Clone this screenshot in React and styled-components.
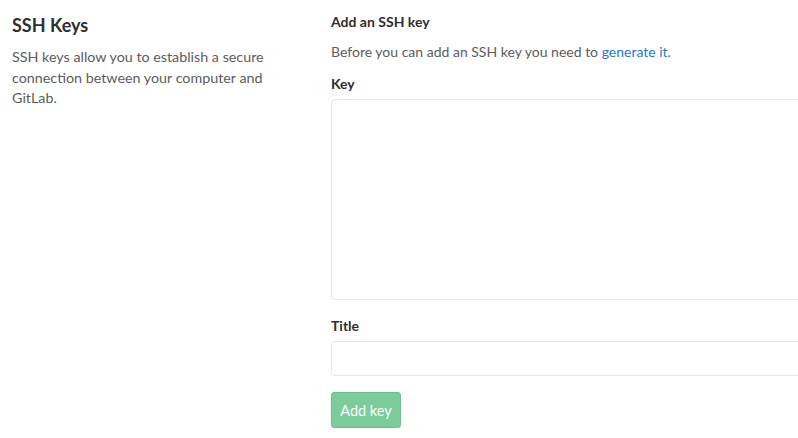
import React from "react";
import styled, { createGlobalStyle } from "styled-components";

const Global = createGlobalStyle`
  html, body { margin: 0; padding: 0; background: #fff; overflow: hidden; }
  body { font-family: Lato, "Noto Sans", sans-serif; }
`;

const Page = styled.div`
  display: grid;
  grid-template-columns: 331px 600px;
  width: 931px;
`;

const Side = styled.div`
  padding: 13px 0 0 12px;
`;

const SideTitle = styled.h4`
  margin: 0 0 10px;
  font-size: 18px;
  line-height: 24px;
  font-weight: 700;
  color: #2e2e2e;
`;

const SideText = styled.p`
  margin: 0;
  font-size: 14.3px;
  line-height: 20.5px;
  color: #5c5c5c;
  width: 265px;
`;

const Main = styled.div`
  padding-top: 12px;
  display: flex;
  flex-direction: column;
`;

const FormTitle = styled.h5`
  margin: 0 0 10px;
  font-size: 14px;
  line-height: 20px;
  font-weight: 700;
  color: #2e2e2e;
`;

const Help = styled.p`
  margin: 0 0 12px;
  font-size: 14px;
  line-height: 20px;
  color: #5c5c5c;
`;

const Link = styled.a`
  color: #1f78d1;
  text-decoration: none;
`;

const Label = styled.label`
  display: block;
  font-size: 14px;
  line-height: 20px;
  font-weight: 700;
  color: #2e2e2e;
  margin-bottom: 5px;
`;

const Field = styled.div`
  display: flex;
  flex-direction: column;
  margin-bottom: ${p => p.$gap || 16}px;
`;

const TextArea = styled.textarea`
  box-sizing: border-box;
  width: 100%;
  height: ${p => p.$h}px;
  border: 1px solid #e5e5e5;
  border-radius: 4px;
  resize: none;
  padding: 6px 10px;
  font: inherit;
  outline: none;
`;

const Input = styled.input`
  box-sizing: border-box;
  width: 100%;
  height: 35px;
  border: 1px solid #e5e5e5;
  border-radius: 4px;
  padding: 6px 10px;
  font: inherit;
  outline: none;
`;

const Button = styled.button`
  align-self: flex-start;
  box-sizing: border-box;
  width: 70px;
  height: 36px;
  padding: 0;
  border: 1px solid #6fc08e;
  border-radius: 3px;
  background: #7ccb9a;
  color: #fff;
  font-family: Lato, "Noto Sans", sans-serif;
  font-size: 14.5px;
  cursor: not-allowed;
`;

export default function App() {
  return (
    <>
      <Global />
      <Page>
        <Side>
          <SideTitle>SSH Keys</SideTitle>
          <SideText>
            SSH keys allow you to establish a secure connection between your computer and GitLab.
          </SideText>
        </Side>
        <Main>
          <FormTitle>Add an SSH key</FormTitle>
          <Help>
            Before you can add an SSH key you need to <Link href="#">generate it.</Link>
          </Help>
          <Field $gap={16}>
            <Label>Key</Label>
            <TextArea $h={201} />
          </Field>
          <Field $gap={16}>
            <Label>Title</Label>
            <Input />
          </Field>
          <Button disabled>Add key</Button>
        </Main>
      </Page>
    </>
  );
}
